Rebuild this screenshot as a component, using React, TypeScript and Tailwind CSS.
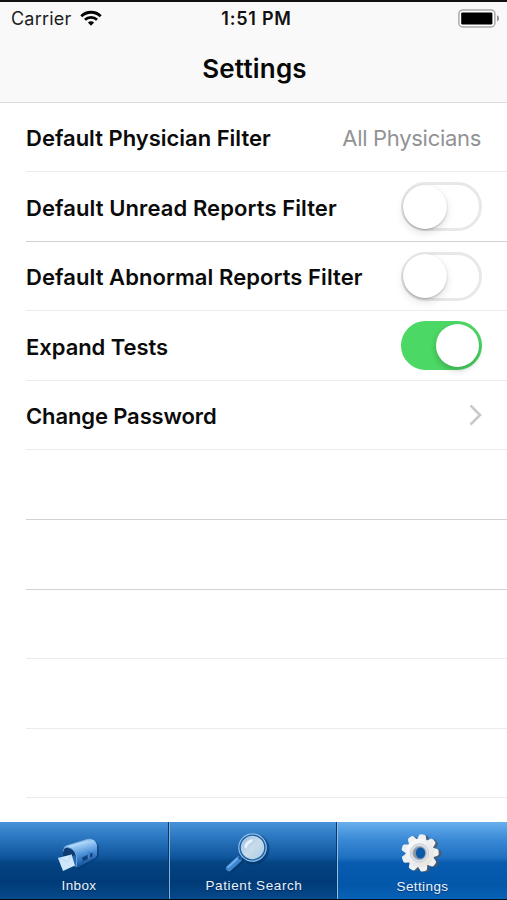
import * as React from "react";
import { clsx } from "clsx";

type Tone = "soft" | "hard";

interface RowProps {
  height: 69 | 70;
  tone: Tone;
  children?: React.ReactNode;
}

function Row({ height, tone, children }: RowProps) {
  return (
    <div
      className={clsx(
        "ml-[26px] flex flex-none items-center justify-between border-b pr-[25px]",
        height === 69 ? "h-[69px]" : "h-[70px]",
        tone === "hard" ? "border-[#d2d2d4]" : "border-[#ebebec]",
      )}
    >
      {children}
    </div>
  );
}

function Label({ children, className }: { children: React.ReactNode; className: string }) {
  return (
    <span className={clsx("pt-[2px] whitespace-nowrap text-[22px] leading-7 font-semibold text-[#0b0b0b]", className)}>
      {children}
    </span>
  );
}

function Toggle({ initial = false }: { initial?: boolean }) {
  const [on, setOn] = React.useState(initial);
  return (
    <button
      role="switch"
      aria-checked={on}
      onClick={() => setOn(!on)}
      className={clsx(
        "flex h-[49px] w-[81px] flex-none items-center rounded-full border-[3px]",
        on ? "justify-end border-[#4cd864] bg-[#4cd864]" : "justify-start border-[#e8e8e8] bg-white",
      )}
    >
      <span
        className={clsx(
          "flex-none rounded-full bg-white",
          on
            ? "size-[43px] shadow-[0_3px_6px_rgba(0,0,0,0.22)]"
            : "-ml-px size-[44px] shadow-[0_4px_8px_rgba(0,0,0,0.12),0_1px_2px_rgba(0,0,0,0.24)]",
        )}
      />
    </button>
  );
}

function WifiIcon() {
  return (
    <svg width="22" height="17" viewBox="0 0 24 18" fill="none" stroke="#050505">
      <path d="M1.4 6.5C7.2 .8 16.8 .8 22.6 6.5" strokeWidth="3.1" />
      <path d="M5.4 10.3C9 6.9 15 6.9 18.6 10.3" strokeWidth="3" />
      <path d="M12 16.9L8.6 13.3C10.4 11.5 13.6 11.5 15.4 13.3Z" fill="#050505" stroke="none" />
    </svg>
  );
}

function BatteryIcon() {
  return (
    <svg width="42" height="19" viewBox="0 0 42 19">
      <rect x=".9" y=".9" width="36" height="17" rx="4" fill="#fff" stroke="#a9a9a9" strokeWidth="1.5" />
      <rect x="3.2" y="3.4" width="31.2" height="12" rx="1.2" fill="#000" />
      <path d="M39 6.3C41.6 7.2 41.6 11.6 39 12.5Z" fill="#8d8d8d" />
    </svg>
  );
}

function MailboxIcon() {
  return (
    <svg width="44" height="38" viewBox="0 0 44 38">
      <defs>
        <linearGradient id="mb-body" x1=".3" y1="0" x2=".6" y2="1">
          <stop offset="0" stopColor="#3f83c8" />
          <stop offset=".22" stopColor="#a4d0f8" />
          <stop offset=".55" stopColor="#4f94da" />
          <stop offset=".85" stopColor="#1e60a8" />
          <stop offset="1" stopColor="#134d8c" />
        </linearGradient>
      </defs>
      <path d="M8 12L33 2Q40 2 42 9V19L22 31L14 30Z" fill="#052f61" opacity=".45" />
      <path d="M6.500 10Q8 8 10 7.200L31 .8Q38 .3 40 7V17Q40 19 37 20.500L22 29Q18 30.500 16 28Z" fill="url(#mb-body)" />
      <path d="M6 13.500Q6 9 10 9.200Q17 10 19 17L18.500 22L15 18L6 18Z" fill="#0c3c72" />
      <path d="M18.500 17Q20 23 18.500 29L16.500 27L15 18Z" fill="#2468b0" />
      <path d="M6 13.500Q7 9 10.500 9.300Q17.500 10.500 19.500 18Q20.300 23 19 29" fill="none" stroke="#6da8e3" strokeWidth="1" />
      <path d="M25 19.500L35.500 14.500V18.500L26 23.500Z" fill="#10437d" />
      <path d="M30.500 14L33 13V20L30.800 21Z" fill="#3f84ca" />
      <path d="M12 8.800L31 3" stroke="#c5e4ff" strokeWidth="1.800" opacity=".5" />
      <path d="M1 20L14.500 16.500L18 27.500L6 33Z" fill="#cfe7fb" />
      <path d="M1 20L11 23.500L14.500 16.500" fill="none" stroke="#aed3f1" strokeWidth=".8" />
    </svg>
  );
}

function MagnifierIcon() {
  return (
    <svg width="46" height="42" viewBox="0 0 46 42">
      <defs>
        <linearGradient id="lens" x1="0" y1="0" x2="1" y2="1">
          <stop offset="0" stopColor="#8dbce7" />
          <stop offset=".5" stopColor="#c9dceb" />
          <stop offset="1" stopColor="#a9c9e4" />
        </linearGradient>
      </defs>
      <circle cx="30" cy="17" r="14" fill="none" stroke="#04305f" strokeWidth="3" opacity=".5" />
      <path d="M7 38L17 28.500" stroke="#052f5d" strokeWidth="6" strokeLinecap="round" opacity=".45" />
      <path d="M5 36.200L14.500 27.500" stroke="#3d87d2" strokeWidth="6" strokeLinecap="round" />
      <path d="M4.200 35L13.500 26.500" stroke="#75aee8" strokeWidth="1.700" strokeLinecap="round" />
      <path d="M15 27L19 23" stroke="#1b5593" strokeWidth="3" />
      <circle cx="28.500" cy="15.500" r="13" fill="url(#lens)" stroke="#1c5ea0" strokeWidth="2.600" />
      <circle cx="28.500" cy="15.500" r="13.700" fill="none" stroke="#91c2ee" strokeWidth="1.200" />
      <path d="M20.500 15.500Q20 9.500 28 7Q30 8.500 27 10.500Q23 12.500 22.500 16.500Z" fill="#f3f9ff" opacity=".85" />
    </svg>
  );
}

const TEETH = [0, 40, 80, 120, 160, 200, 240, 280, 320];

function GearShape({ fill }: { fill: string }) {
  return (
    <g fill={fill}>
      <circle cx="19" cy="20" r="14.200" />
      {TEETH.map((deg) => (
        <path
          key={deg}
          d="M14 8L15.600 2.600Q16 1.500 17.500 1.300H20.500Q22 1.500 22.400 2.600L24 8Z"
          transform={`rotate(${deg + 8} 19 20)`}
        />
      ))}
    </g>
  );
}

function GearIcon() {
  return (
    <svg width="44" height="42" viewBox="0 0 44 42">
      <defs>
        <linearGradient id="gear-face" x1="0" y1="0" x2="1" y2="1">
          <stop offset="0" stopColor="#ffffff" />
          <stop offset=".6" stopColor="#eaeaee" />
          <stop offset="1" stopColor="#e9e4c9" />
        </linearGradient>
      </defs>
      <g transform="translate(2.600 .8)" opacity=".85">
        <GearShape fill="#4f5965" />
      </g>
      <GearShape fill="#edf0f4" />
      <circle cx="19" cy="20" r="14" fill="url(#gear-face)" />
      <circle cx="18.500" cy="20" r="9.200" fill="#dde1e8" stroke="#c9cdd6" strokeWidth="1" />
      <circle cx="18.500" cy="20" r="6.600" fill="#8993a4" stroke="#a4adba" strokeWidth="1" />
      <ellipse cx="19.500" cy="20" rx="4.600" ry="5.500" fill="#0c58a8" />
    </svg>
  );
}

interface TabProps {
  label: string;
  icon: React.ReactNode;
  active?: boolean;
  className: string;
  iconClass: string;
  labelClass: string;
}

function Tab({ label, icon, active, className, iconClass, labelClass }: TabProps) {
  return (
    <button
      className={clsx(
        "flex h-[77px] flex-col items-center",
        active
          ? "bg-[linear-gradient(#68afec_0%,#3c8bd7_22%,#1e70c1_46%,#075cb0_53%,#0357a9_82%,#0862b7_100%)]"
          : "bg-[linear-gradient(#4792d9_0%,#2874bd_22%,#0f559c_46%,#044482_53%,#003b77_78%,#07498b_100%)]",
        className,
      )}
    >
      <span className={clsx("flex flex-none items-start", iconClass)}>{icon}</span>
      <span
        className={clsx(
          "whitespace-nowrap font-['Liberation_Sans',Arial,sans-serif] text-[13.5px] leading-[18px] text-[#e9f2fb] [text-shadow:0_1px_1px_rgba(0,20,60,0.5)]",
          labelClass,
        )}
      >
        {label}
      </span>
    </button>
  );
}

export default function App() {
  return (
    <div className="flex h-[900px] w-[507px] flex-col overflow-hidden bg-white font-['Inter',sans-serif]">
      <header className="h-[103px] flex-none border-t-2 border-b border-t-[#111] border-b-[#dcdcdd] bg-[#f9f9f9]">
        <div className="grid h-8 grid-cols-3 items-center pr-[7px] pl-[11px]">
          <div className="flex items-center gap-[9px] text-[18px] text-[#1c1c1c]">
            <span className="tracking-[0.2px]">Carrier</span>
            <WifiIcon />
          </div>
          <span className="pt-px pl-[2px] text-center text-[18px] tracking-[0.75px] font-semibold text-[#111]">
            1:51 PM
          </span>
          <div className="flex justify-end">
            <BatteryIcon />
          </div>
        </div>
        <h1 className="mt-[17px] pl-[2px] text-center text-[26px] leading-9 font-semibold tracking-[0.2px] text-[#080808]">
          Settings
        </h1>
      </header>

      <main className="flex flex-1 flex-col overflow-hidden">
        <Row height={69} tone="soft">
          <Label className="tracking-[-0.01px]">Default Physician Filter</Label>
          <span className="pt-[2px] pr-px text-[22px] tracking-[-0.3px] whitespace-nowrap text-[#929294]">
            All Physicians
          </span>
        </Row>
        <Row height={70} tone="hard">
          <Label className="tracking-[0.09px]">Default Unread Reports Filter</Label>
          <Toggle />
        </Row>
        <Row height={69} tone="soft">
          <Label className="tracking-[0.07px]">Default Abnormal Reports Filter</Label>
          <Toggle />
        </Row>
        <Row height={70} tone="soft">
          <Label className="tracking-[-0.05px]">Expand Tests</Label>
          <Toggle initial />
        </Row>
        <Row height={69} tone="soft">
          <Label className="tracking-[-0.12px]">Change Password</Label>
          <svg width="13" height="22" viewBox="0 0 13 22" fill="none" stroke="#c9c9cc" strokeWidth="2.600">
            <path d="M1.500 1.500L11 11L1.500 20.500" />
          </svg>
        </Row>
        <Row height={70} tone="hard" />
        <Row height={70} tone="hard" />
        <Row height={69} tone="soft" />
        <Row height={70} tone="soft" />
        <Row height={69} tone="soft" />
      </main>

      <nav className="flex h-[78px] flex-none border-b border-[#050d18] bg-[#050d18]">
        <Tab
          label="Inbox"
          className="w-[169px] border-r border-r-[#0b3766] pt-[16px] pr-[10px]"
          iconClass="h-[39px]"
          labelClass="tracking-[0.4px]"
          icon={<MailboxIcon />}
        />
        <Tab
          label="Patient Search"
          className="w-[168px] border-x border-l-[#7fb1e0] border-r-[#0b3766] pt-[10px]"
          iconClass="mr-[12px] h-[45px]"
          labelClass="pl-[2px] tracking-[0.6px]"
          icon={<MagnifierIcon />}
        />
        <Tab
          label="Settings"
          active
          className="w-[170px] border-l border-l-[#8cc0ef] pt-[11px]"
          iconClass="h-[45px]"
          labelClass="tracking-[0.4px]"
          icon={<GearIcon />}
        />
      </nav>
    </div>
  );
}
